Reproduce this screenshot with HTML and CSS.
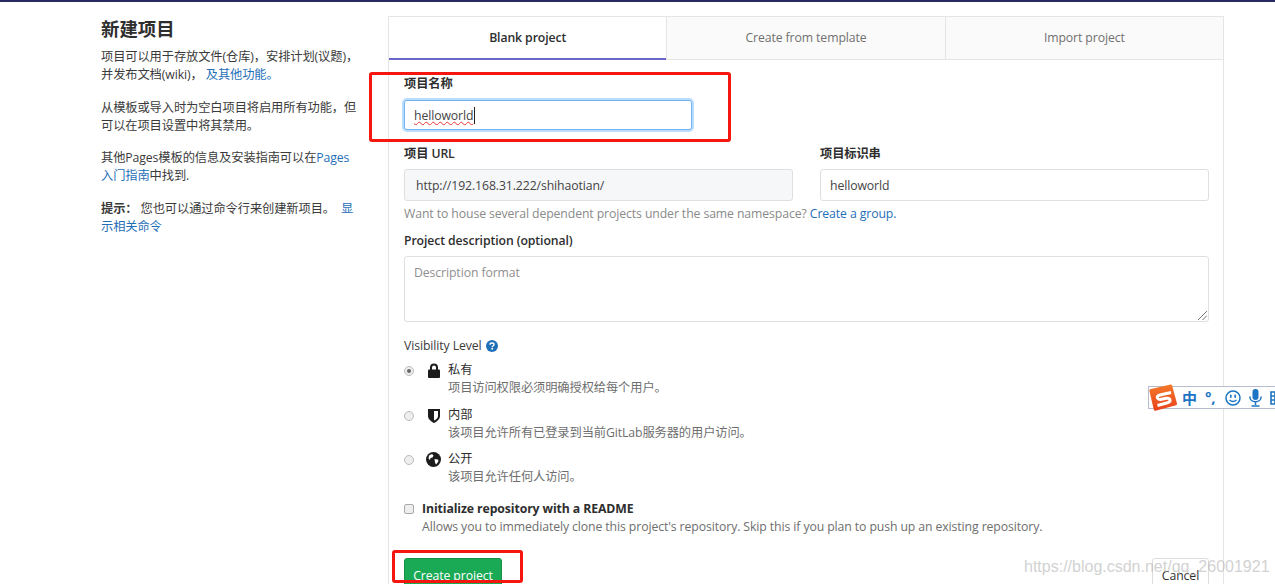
FILE: index.html
```html
<!DOCTYPE html>
<html lang="zh">
<head>
<meta charset="utf-8">
<title>新建项目</title>
<link rel="stylesheet" href="styles.css">
</head>
<body>
<div class="topbar"></div>
<main class="layout">
  <aside class="intro">
    <h1>新建项目</h1>
    <p>项目可以用于存放文件(仓库)，安排计划(议题)，并发布文档(wiki)， <a href="#">及其他功能。</a></p>
    <p>从模板或导入时为空白项目将启用所有功能，但可以在项目设置中将其禁用。</p>
    <p>其他Pages模板的信息及安装指南可以在<a href="#">Pages入门指南</a>中找到.</p>
    <p><strong>提示：</strong> 您也可以通过命令行来创建新项目。&nbsp; <a href="#">显示相关命令</a></p>
  </aside>
  <section class="panel">
    <nav class="tabs">
      <div class="tab active">Blank project</div>
      <div class="tab">Create from template</div>
      <div class="tab">Import project</div>
    </nav>
    <form class="form">
      <div class="field name-field">
        <label class="label">项目名称</label>
        <div class="input focus"><span class="typed">helloworld</span><span class="caret"></span></div>
      </div>
      <div class="row">
        <div class="field url-col">
          <label class="label">项目 URL</label>
          <div class="input readonly">http://192.168.31.222/shihaotian/</div>
        </div>
        <div class="field slug-col">
          <label class="label">项目标识串</label>
          <div class="input">helloworld</div>
        </div>
      </div>
      <p class="hint">Want to house several dependent projects under the same namespace? <a href="#">Create a group.</a></p>
      <div class="field desc-field">
        <label class="label">Project description (optional)</label>
        <div class="input textarea">
          <span class="placeholder">Description format</span>
          <svg class="grip" width="9" height="9" viewBox="0 0 9 9"><path d="M0 9L9 0M4.5 9L9 4.5" stroke="#777" fill="none"/></svg>
        </div>
      </div>
      <div class="vis-title">Visibility Level
        <svg class="help" width="12" height="12" viewBox="0 0 12 12"><circle cx="6" cy="6" r="6" fill="#1f6fb8"/><path d="M4 4.7C4 3.5 5 3 6 3s2 .6 2 1.6C8 6 6.2 5.9 6.2 7.2" stroke="#fff" stroke-width="1.4" fill="none"/><rect x="5.4" y="8" width="1.6" height="1.6" fill="#fff"/></svg>
      </div>
      <div class="vis-option first">
        <span class="radio checked"></span>
        <span class="vis-icon"><svg width="14" height="15" viewBox="0 0 14 15"><path d="M3 7V4.500a4 4 0 0 1 8 0V7H9V4.500a2 2 0 0 0-4 0V7z" fill="#1c1c1c"/><rect x="1" y="6.500" width="12" height="8.500" rx="1" fill="#1c1c1c"/></svg></span>
        <div class="vis-text"><div class="vis-name">私有</div><div class="vis-desc">项目访问权限必须明确授权给每个用户。</div></div>
      </div>
      <div class="vis-option">
        <span class="radio"></span>
        <span class="vis-icon"><svg width="14" height="15" viewBox="0 0 14 15"><path d="M1 1h12v7c0 3-3 5.500-6 7C4 13.500 1 11 1 8z" fill="#1c1c1c"/><path d="M7 3h4v5c0 2-2 3.500-4 4.600z" fill="#fff"/></svg></span>
        <div class="vis-text"><div class="vis-name">内部</div><div class="vis-desc">该项目允许所有已登录到当前GitLab服务器的用户访问。</div></div>
      </div>
      <div class="vis-option">
        <span class="radio"></span>
        <span class="vis-icon globe"><svg width="15" height="15" viewBox="0 0 15 15"><circle cx="7.500" cy="7.500" r="7.500" fill="#1c1c1c"/><path d="M3 3.500l3-1.500 1.500 1.500-1 2-2 .5-.5 2-1.500-1.500zM8.500 7l3.500.5.500 2-2.500 3-1-2z" fill="#fff"/></svg></span>
        <div class="vis-text"><div class="vis-name">公开</div><div class="vis-desc">该项目允许任何人访问。</div></div>
      </div>
      <div class="readme">
        <span class="checkbox"></span>
        <div><div class="readme-title">Initialize repository with a README</div>
        <div class="vis-desc">Allows you to immediately clone this project's repository. Skip this if you plan to push up an existing repository.</div></div>
      </div>
      <div class="actions">
        <button type="button" class="btn primary">Create project</button>
        <button type="button" class="btn cancel">Cancel</button>
      </div>
    </form>
  </section>
</main>
<div class="mark mark-name"></div>
<div class="mark mark-btn"></div>
<div class="ime">
  <svg class="ime-logo" width="30" height="29" viewBox="0 0 30 29"><defs><linearGradient id="sg" x1="0" y1="0" x2="0" y2="1"><stop offset="0" stop-color="#f47a2a"/><stop offset="1" stop-color="#e8411c"/></linearGradient></defs><path d="M3 6L22.500 1.500q1.300-.3 1.600 1L29 20.500q.3 1.300-1 1.700L7.500 27.700q-1.300.3-1.700-1L1.300 7.500Q1 6.300 3 6z" fill="url(#sg)"/><path d="M23 9.500L12 12q-3.500 1-2.600 3t4 1.300l5-1q3-.5 3.600 1.500t-2.500 3L9.500 22.500" stroke="#fff" stroke-width="3" fill="none"/></svg>
  <span class="ime-cn">中</span>
  <span class="ime-punct">°,</span>
  <svg class="ime-ico" width="16" height="16" viewBox="0 0 16 16"><circle cx="8" cy="8" r="7" fill="none" stroke="#1d74c4" stroke-width="1.500"/><rect x="5" y="4.500" width="1.600" height="3.500" rx=".8" fill="#1d74c4"/><rect x="9.400" y="4.500" width="1.600" height="3.500" rx=".8" fill="#1d74c4"/><path d="M4.500 10q3.500 3 7 0" stroke="#1d74c4" stroke-width="1.300" fill="none"/></svg>
  <svg class="ime-ico" width="13" height="18" viewBox="0 0 13 18"><rect x="3.500" y="0" width="6" height="11" rx="3" fill="#1d74c4"/><path d="M.8 7.500c0 7 11.400 7 11.400 0M6.500 13v3M2.500 17h8" stroke="#1d74c4" stroke-width="1.500" fill="none"/></svg>
  <svg class="ime-ico" width="6" height="14" viewBox="0 0 6 14"><path d="M1 1h12v12H1zM1 5h12M1 9h12M5 1v12" stroke="#1d74c4" stroke-width="1.600" fill="none"/></svg>
</div>
<div class="watermark">https://blog.csdn.net/qq_26001921</div>
</body>
</html>
```
FILE: styles.css
```css
* { box-sizing: border-box; }
html, body { margin: 0; height: 584px; overflow: hidden; background: #fff; }
body { font-family: "Open Sans", "Noto Sans CJK SC", sans-serif; font-size: 12.25px; letter-spacing: -0.1px; color: #2e2e2e; position: relative; }
a { color: #1f6fb8; text-decoration: none; }
.topbar { height: 2px; background: #292961; }
.layout { display: flex; padding: 14px 51px 0 101px; gap: 27px; align-items: flex-start; height: 582px; overflow: hidden; }
.intro { width: 260px; flex: none; line-height: 18px; padding-top: 1px; }
.intro h1 { font-size: 18.4px; letter-spacing: 0; line-height: 24px; margin: 0 0 7px; font-weight: 700; color: #2e2e2e; }
.intro p { margin: 0 0 14.6px; color: #3a3a3a; }
.intro strong { font-weight: 700; }
.panel { flex: 1; border: 1px solid #e5e5e5; border-bottom: 0; height: 600px; }
.tabs { display: flex; height: 43px; }
.tab { flex: 1; display: flex; align-items: center; justify-content: center; background: #fafafa; color: #707070; border-bottom: 1px solid #e5e5e5; border-left: 1px solid #e5e5e5; padding-bottom: 1px; }
.tab.active { background: #fff; color: #2e2e2e; font-weight: 600; border-left: 0; border-bottom: 2px solid #6b67c9; }
.form { padding: 15px 14px 0 15px; }
.label { display: block; font-weight: 600; line-height: 18px; margin-bottom: 7px; color: #2e2e2e; }
.input { height: 32px; border: 1px solid #dfdfdf; border-radius: 3px; padding: 0 9px; display: flex; align-items: center; background: #fff; color: #444; }
.name-field { width: 288px; }
.input.focus { height: 30px; border-color: #73b3f5; box-shadow: 0 0 0 2px #bcdcfb; }
.typed { text-decoration: underline wavy #e33; text-decoration-thickness: 1px; }
.caret { width: 1px; height: 17px; background: #222; margin-left: 1px; }
.row { display: flex; gap: 27px; margin-top: 15px; }
.row .label { margin-bottom: 6px; }
.url-col { width: 389px; }
.slug-col { flex: 1; }
.readonly { background: #f6f7f9; padding-left: 11px; }
.hint { margin: 4px 0 0; line-height: 18px; color: #8a8a8a; }
.desc-field { margin-top: 9px; }
.desc-field .label { margin-bottom: 6px; }
.textarea { height: 66px; align-items: flex-start; padding-top: 7px; position: relative; }
.placeholder { color: #8f8f8f; }
.grip { position: absolute; right: 1px; bottom: 1px; }
.vis-title { margin-top: 15px; line-height: 18px; display: flex; align-items: center; gap: 4px; color: #3a3a3a; }
.vis-option { display: flex; margin-top: 7px; height: 37px; line-height: 18px; }
.vis-option.first { margin-top: 6px; height: 38px; }
.radio { width: 10px; height: 10px; border-radius: 50%; border: 1px solid #bbb; background: #eee; margin-top: 5px; flex: none; position: relative; }
.radio.checked::after { content: ""; position: absolute; left: 2px; top: 2px; width: 4px; height: 4px; border-radius: 50%; background: #666; }
.vis-icon { width: 34px; padding-left: 13px; flex: none; display: block; padding-top: 2px; }
.vis-icon.globe { padding-left: 12px; }
.vis-name { color: #2e2e2e; }
.vis-desc { color: #6e6e6e; line-height: 18px; }
.readme { display: flex; gap: 8px; margin-top: 13px; line-height: 18px; }
.checkbox { width: 10px; height: 10px; border: 1px solid #aaa; border-radius: 2px; background: #eee; margin-top: 4px; flex: none; }
.readme-title { font-weight: 700; color: #2e2e2e; }
.actions { display: flex; justify-content: space-between; margin-top: 22px; }
.btn { height: 34px; font: inherit; letter-spacing: inherit; border-radius: 3px; border: 1px solid #ddd; background: #fff; padding: 0 4px; color: #2e2e2e; white-space: nowrap; }
.primary { background: #1aaa55; border-color: #168f48; color: #fff; width: 98px; }
.cancel { width: 57px; }
.mark { position: absolute; border: 3px solid #f5170f; border-radius: 3px; pointer-events: none; }
.mark-name { left: 369px; top: 72px; width: 362px; height: 70px; }
.mark-btn { left: 392px; top: 550px; width: 131px; height: 33px; }
.ime { position: absolute; left: 1148px; top: 386px; width: 127px; height: 23px; border: 1px solid #b6bccb; border-right: 0; background: #fff; display: flex; align-items: center; gap: 8px; padding-left: 33px; }
.ime-logo { position: absolute; left: -1px; top: -4px; }
.ime-ico { flex: none; }
.ime-cn { color: #1d74c4; font-weight: 700; font-size: 15px; letter-spacing: 0; }
.ime-punct { color: #1d74c4; font-weight: 700; font-size: 15px; width: 12px; flex: none; line-height: 1; }
.watermark { position: absolute; left: 1024px; top: 558px; font-family: "Liberation Sans", sans-serif; letter-spacing: 0; font-size: 16px; color: #b5b5b5; opacity: .6; white-space: nowrap; }
```
